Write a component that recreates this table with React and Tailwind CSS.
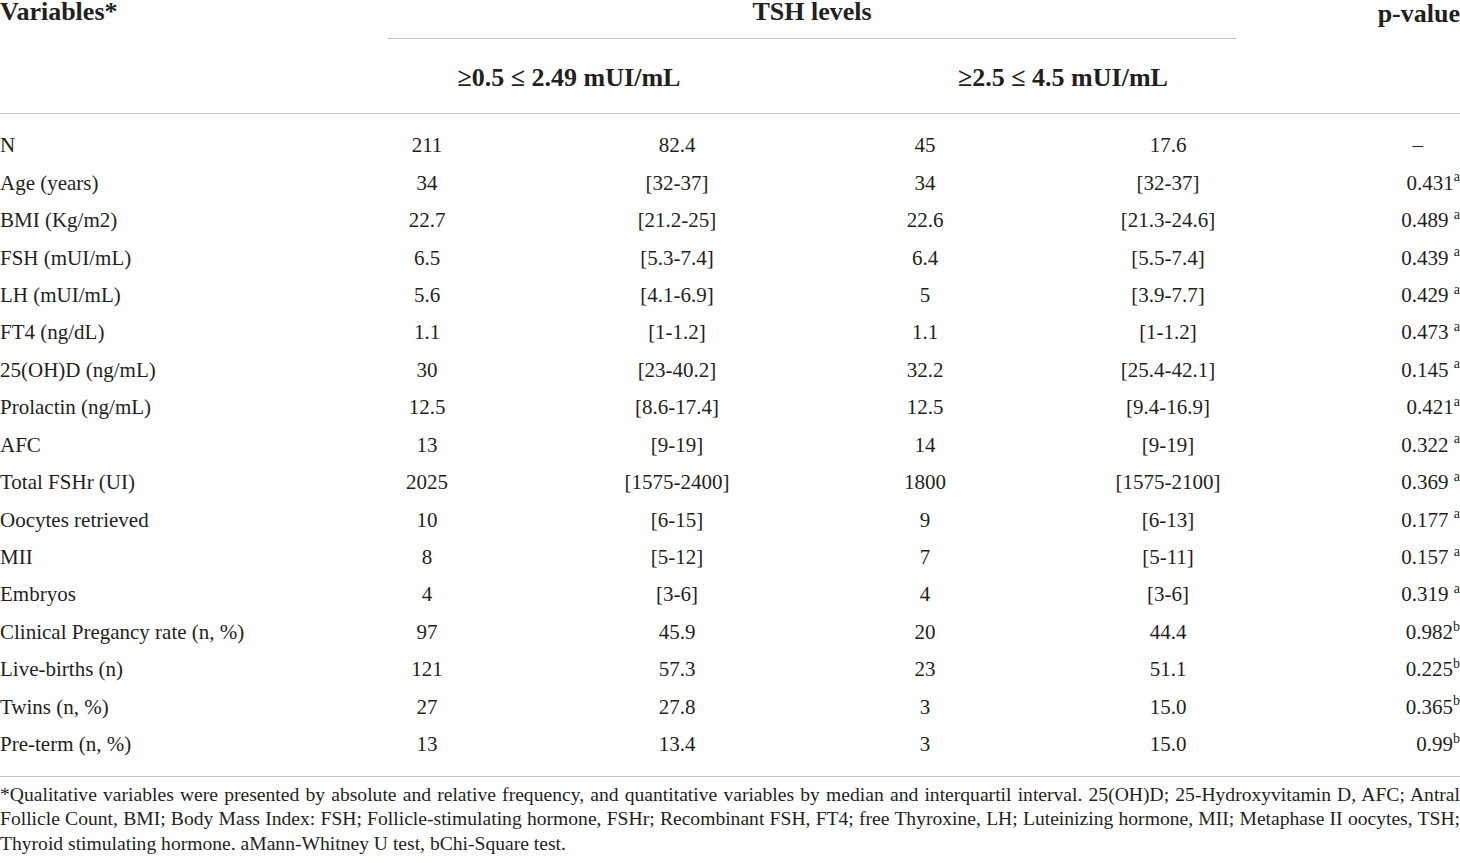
const rows = [
    ["N", "211", "82.4", "45", "17.6", "–", ""],
    ["Age (years)", "34", "[32-37]", "34", "[32-37]", "0.431", "a"],
    ["BMI (Kg/m2)", "22.7", "[21.2-25]", "22.6", "[21.3-24.6]", "0.489 ", "a"],
    ["FSH (mUI/mL)", "6.5", "[5.3-7.4]", "6.4", "[5.5-7.4]", "0.439 ", "a"],
    ["LH (mUI/mL)", "5.6", "[4.1-6.9]", "5", "[3.9-7.7]", "0.429 ", "a"],
    ["FT4 (ng/dL)", "1.1", "[1-1.2]", "1.1", "[1-1.2]", "0.473 ", "a"],
    ["25(OH)D (ng/mL)", "30", "[23-40.2]", "32.2", "[25.4-42.1]", "0.145 ", "a"],
    ["Prolactin (ng/mL)", "12.5", "[8.6-17.4]", "12.5", "[9.4-16.9]", "0.421", "a"],
    ["AFC", "13", "[9-19]", "14", "[9-19]", "0.322 ", "a"],
    ["Total FSHr (UI)", "2025", "[1575-2400]", "1800", "[1575-2100]", "0.369 ", "a"],
    ["Oocytes retrieved", "10", "[6-15]", "9", "[6-13]", "0.177 ", "a"],
    ["MII", "8", "[5-12]", "7", "[5-11]", "0.157 ", "a"],
    ["Embryos", "4", "[3-6]", "4", "[3-6]", "0.319 ", "a"],
    ["Clinical Pregancy rate (n, %)", "97", "45.9", "20", "44.4", "0.982", "b"],
    ["Live-births (n)", "121", "57.3", "23", "51.1", "0.225", "b"],
    ["Twins (n, %)", "27", "27.8", "3", "15.0", "0.365", "b"],
    ["Pre-term (n, %)", "13", "13.4", "3", "15.0", "0.99", "b"],
];

const TableRow = ({ row }) => {
    const [label, a, b, c, d, p, sup] = row;
    return (
        <div className="grid grid-cols-[302px_250px_250px_246px_240px_172px] h-[37.45px] items-center whitespace-nowrap">
            <div>{label}</div>
            <div className="text-center">{a}</div>
            <div className="text-center">{b}</div>
            <div className="text-center">{c}</div>
            <div className="text-center">{d}</div>
            {sup ? (
                <div className="text-right">
                    {p}
                    <sup className="text-[14px] -top-[0.6em]">{sup}</sup>
                </div>
            ) : (
                <div className="text-right pr-[37px]">{p}</div>
            )}
        </div>
    );
};

export default function App() {
    return (
        <div className="w-[1460px] bg-white font-['Liberation_Serif',serif] text-[#231f20]">
            {/* header */}
            <div className="grid grid-cols-[388px_848px_224px] h-[38px] text-[26px] leading-[24px] font-bold">
                <div>Variables*</div>
                <div className="text-center">TSH levels</div>
                <div className="text-right pt-[2px]">p-value</div>
            </div>
            <div className="grid grid-cols-[388px_848px_224px]">
                <div></div>
                <div className="h-px bg-[#c6c6c6]"></div>
                <div></div>
            </div>
            <div className="grid grid-cols-[388px_362px_140px_346px_224px] h-[74px] items-center pt-[4px] text-[26px] leading-[24px] font-bold whitespace-nowrap">
                <div></div>
                <div className="text-center">≥0.5 ≤ 2.49 mUI/mL</div>
                <div></div>
                <div className="text-center">≥2.5 ≤ 4.5 mUI/mL</div>
                <div></div>
            </div>
            <div className="h-px bg-[#c6c6c6]"></div>

            {/* body */}
            <div className="pt-[12.5px] pb-[13px] text-[21px] leading-[24px]">
                {rows.map((row) => (
                    <TableRow key={row[0]} row={row} />
                ))}
            </div>
            <div className="h-px bg-[#c6c6c6]"></div>

            {/* footnote */}
            <div className="pt-[6px] text-[19.6px] leading-[24.5px] whitespace-nowrap">
                <div className="text-justify [text-align-last:justify]">
                    *Qualitative variables were presented by absolute and relative frequency, and quantitative variables by median and interquartil interval. 25(OH)D; 25-Hydroxyvitamin D, AFC; Antral
                </div>
                <div className="text-justify [text-align-last:justify]">
                    Follicle Count, BMI; Body Mass Index: FSH; Follicle-stimulating hormone, FSHr; Recombinant FSH, FT4; free Thyroxine, LH; Luteinizing hormone, MII; Metaphase II oocytes, TSH;
                </div>
                <div>Thyroid stimulating hormone. aMann-Whitney U test, bChi-Square test.</div>
            </div>
        </div>
    );
}
